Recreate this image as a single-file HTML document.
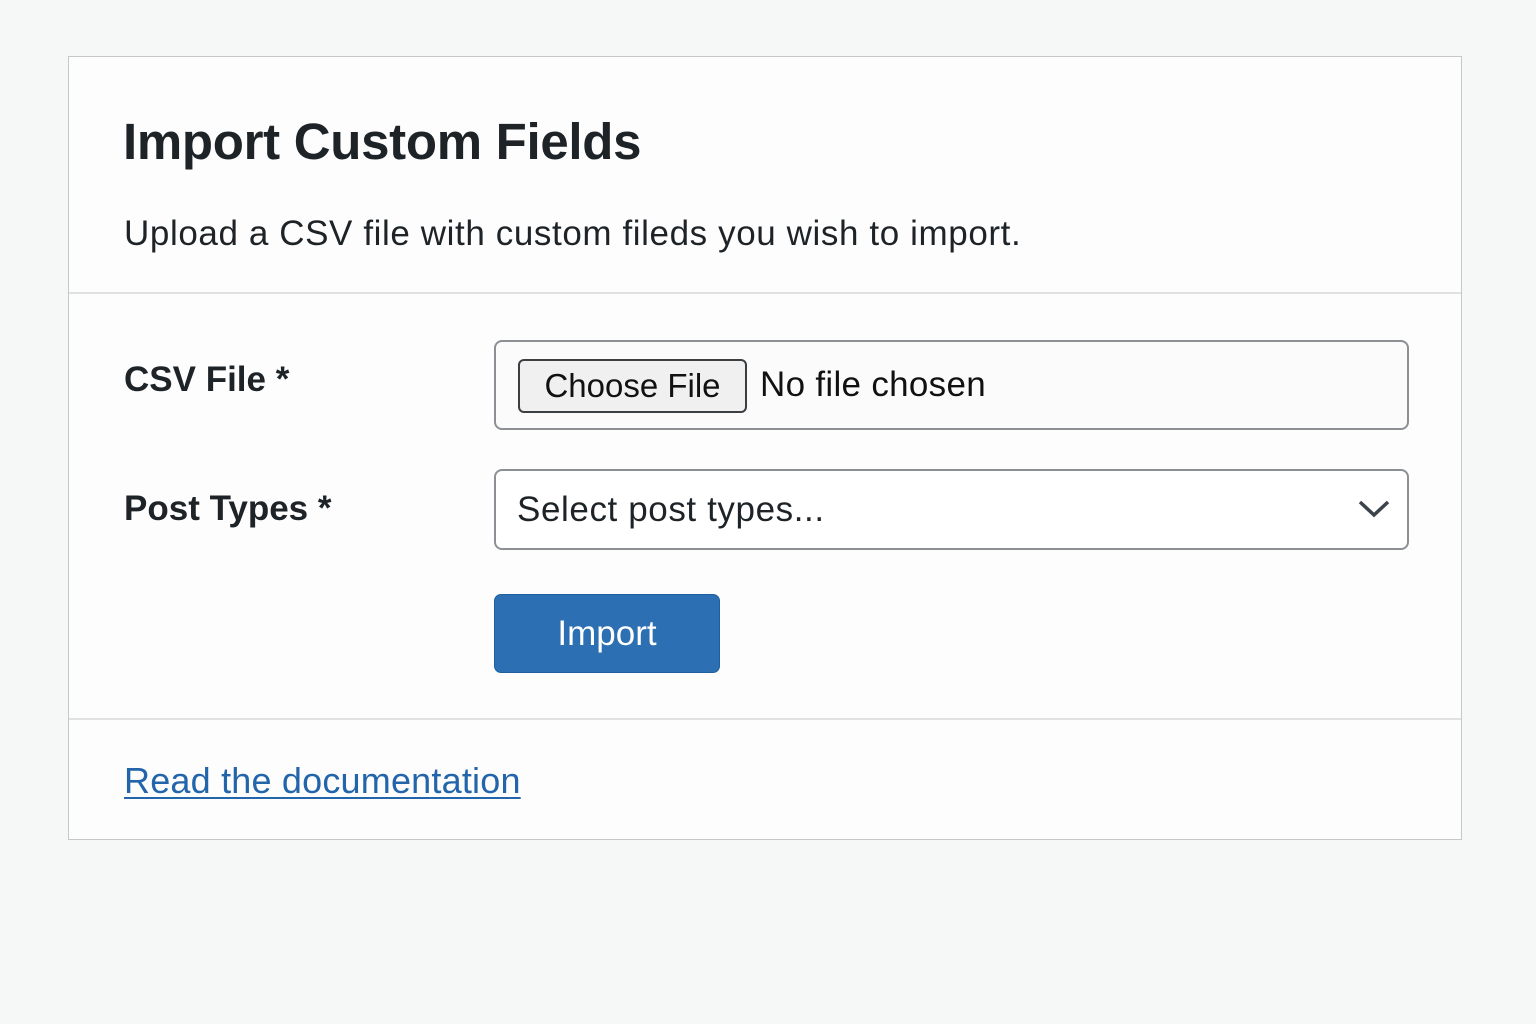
<!DOCTYPE html>
<html><head><style>
body{margin:0;width:1536px;height:1024px;background:#f6f7f7;font-family:"Liberation Sans",sans-serif;color:#1d2327;position:relative;overflow:hidden}
.card{position:absolute;left:68px;top:56px;width:1394px;height:784px;background:#fdfdfd;border:1px solid #c5c7c9;box-sizing:border-box}
.a{position:absolute;white-space:nowrap}
.hr{position:absolute;left:0;width:100%;height:2px;background:#dfe1e3}
</style></head><body>
<div class="card">
<div class="a" style="left:54px;top:55px;font-size:51px;font-weight:bold;letter-spacing:-0.3px">Import Custom Fields</div>
<div class="a" style="left:55px;top:157px;font-size:35px;letter-spacing:0.6px">Upload a CSV file with custom fileds you wish to import.</div>
<div class="hr" style="top:235px"></div>
<div class="a" style="left:55px;top:303px;font-size:35px;font-weight:bold">CSV File *</div>
<div class="a" style="left:55px;top:432px;font-size:35px;font-weight:bold">Post Types *</div>
<div class="a" style="left:425px;top:283px;width:915px;height:90px;border:2px solid #8c8f94;border-radius:8px;box-sizing:border-box;background:#fbfbfb"></div>
<div class="a" style="left:449px;top:302px;width:229px;height:54px;border:2px solid #3c3f42;border-radius:6px;box-sizing:border-box;background:#f0f0f0;font-size:33px;line-height:50px;text-align:center;color:#111">Choose File</div>
<div class="a" style="left:691px;top:308px;font-size:35px;letter-spacing:0.3px;color:#111">No file chosen</div>
<div class="a" style="left:425px;top:412px;width:915px;height:81px;border:2px solid #8c8f94;border-radius:8px;box-sizing:border-box;background:#fff"></div>
<div class="a" style="left:448px;top:433px;font-size:35px;letter-spacing:0.6px">Select post types...</div>
<svg class="a" style="left:1288px;top:440px" width="34" height="24" viewBox="0 0 34 24"><path d="M3 5 L17 18 L31 5" fill="none" stroke="#3c434a" stroke-width="3.5"/></svg>
<div class="a" style="left:425px;top:537px;width:226px;height:79px;background:#2c6fb2;border:1px solid #1f5f9f;border-radius:7px;box-sizing:border-box;color:#fff;font-size:35px;line-height:77px;text-align:center">Import</div>
<div class="hr" style="top:661px"></div>
<div class="a" style="left:55px;top:703px;font-size:36px;letter-spacing:0.2px;color:#2365aa;text-decoration:underline;text-decoration-thickness:2px;text-underline-offset:4px">Read the documentation</div>
</div>
</body></html>
